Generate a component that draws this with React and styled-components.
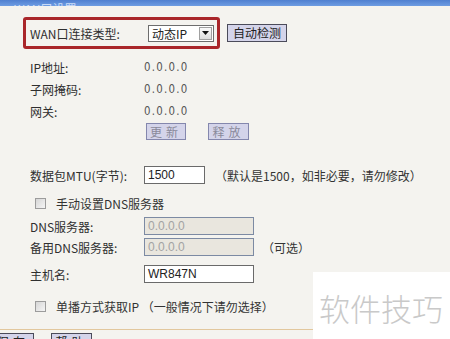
import React from "react";
import styled, { createGlobalStyle } from "styled-components";

const Global = createGlobalStyle`
  html, body { margin: 0; padding: 0; }
  body { background: #f4f3ef; font-family: "Noto Sans CJK SC", "Noto Sans", sans-serif; }
`;

const Page = styled.div`
  position: relative;
  width: 450px;
  height: 339px;
  overflow: hidden;
  background: #f4f3ef;
  color: #333;
  font-size: 12px;
`;

const Header = styled.div`
  height: 6px;
  overflow: hidden;
  display: flex;
  align-items: flex-end;
  padding-left: 14px;
  background: linear-gradient(#4f7fd0, #6d9ce2);
`;

const HeaderTitle = styled.span`
  line-height: 16px;
  font-size: 12px;
  color: #c9dbf7;
  margin-bottom: -11px;
`;

const WanRow = styled.div`
  display: flex;
  align-items: center;
  margin: 11px 0 0 23px;
  height: 32px;
`;

const WanBox = styled.div`
  box-sizing: border-box;
  width: 197px;
  height: 32px;
  border: 3px solid #a9262a;
  border-radius: 3px;
  display: flex;
  align-items: center;
  padding-left: 4px;
`;

const Label = styled.span`
  width: ${(p) => p.$w || 114}px;
  flex: none;
  color: #2f2f2f;
  font-size: 12px;
  white-space: nowrap;
`;

const Select = styled.div`
  box-sizing: border-box;
  width: 66px;
  height: 17px;
  margin-left: 2px;
  border: 1px solid #6d6d6d;
  background: #fff;
  display: flex;
  align-items: center;
  justify-content: space-between;
  padding: 0 1px 0 3px;
  font-size: 12px;
  color: #222;
`;

const DropBtn = styled.span`
  box-sizing: border-box;
  width: 13px;
  height: 13px;
  border: 1px solid #a0a0a0;
  background: linear-gradient(#fafafa, #dcdcdc);
  display: flex;
  align-items: center;
  justify-content: center;
`;

const Btn = styled.button`
  box-sizing: border-box;
  height: ${(p) => p.$h || 18}px;
  width: ${(p) => p.$w}px;
  margin-left: ${(p) => p.$ml || 0}px;
  padding: 0;
  border: 1px solid ${(p) => (p.$disabled ? "#8487ad" : "#4b4b5a")};
  background: #d4d4ea;
  color: ${(p) => (p.$disabled ? "#8a8a9a" : "#222")};
  font-family: "Noto Sans CJK SC", sans-serif;
  font-size: 12px;
  letter-spacing: ${(p) => p.$ls || 0}px;
  line-height: 1;
  flex: none;
`;

const Form = styled.div`
  padding-left: 30px;
`;

const Row = styled.div`
  display: flex;
  align-items: center;
  height: ${(p) => p.$h}px;
  margin-top: ${(p) => p.$mt}px;
`;

const Value = styled.span`
  color: #555;
  font-size: 12px;
  letter-spacing: 1.5px;
  font-family: "DejaVu Sans", sans-serif;
  transform: scaleX(0.85);
  transform-origin: left center;
`;

const Input = styled.div`
  box-sizing: border-box;
  width: ${(p) => p.$w}px;
  height: 18px;
  border: 1px solid ${(p) => (p.$disabled ? "#7c8aa3" : "#6a6a6a")};
  background: ${(p) => (p.$disabled ? "#e9e6de" : "#fff")};
  color: ${(p) => (p.$disabled ? "#a3a3a3" : "#222")};
  font-family: "Liberation Sans", Arial, sans-serif;
  font-size: 12px;
  display: flex;
  align-items: center;
  padding-left: 3px;
  flex: none;
`;

const Note = styled.span`
  margin-left: ${(p) => p.$ml}px;
  color: #333;
  font-size: 12px;
  white-space: nowrap;
`;

const Check = styled.span`
  box-sizing: border-box;
  width: 11px;
  height: 11px;
  margin-left: 5px;
  margin-right: 10px;
  border: 1px solid #9c9c9c;
  background: linear-gradient(135deg, #d6d6d6, #f5f5f5);
  flex: none;
`;

const Divider = styled.div`
  height: 1px;
  margin-top: 16px;
  background: #e2c79d;
`;

const Footer = styled.div`
  display: flex;
  margin: 3px 0 0 -8px;
`;

const Watermark = styled.div`
  position: absolute;
  left: 313px;
  top: 272px;
  width: 137px;
  height: 67px;
  background: #fff;
  color: #c9c9c9;
  font-size: 31px;
  font-family: "Noto Sans CJK SC", sans-serif;
  font-weight: 300;
  display: flex;
  align-items: center;
  padding: 4px 0 0 6px;
  box-sizing: border-box;
  white-space: nowrap;
`;

export default function App() {
  const info = [
    ["IP地址:", "0.0.0.0"],
    ["子网掩码:", "0.0.0.0"],
    ["网关:", "0.0.0.0"],
  ];
  return (
    <Page>
      <Global />
      <Header>
        <HeaderTitle>WAN口设置</HeaderTitle>
      </Header>
      <WanRow>
        <WanBox>
          <Label $w={116}>WAN口连接类型:</Label>
          <Select>
            动态IP
            <DropBtn>
              <svg width="7" height="4" viewBox="0 0 7 4">
                <path d="M0 0h7L3.5 4z" fill="#111" />
              </svg>
            </DropBtn>
          </Select>
        </WanBox>
        <Btn $w={60} $ml={7}>自动检测</Btn>
      </WanRow>
      <Form>
        {info.map(([l, v], i) => (
          <Row key={l} $h={22} $mt={i === 0 ? 7 : 0}>
            <Label>{l}</Label>
            <Value>{v}</Value>
          </Row>
        ))}
        <Row $h={17} $mt={1}>
          <Label $w={116} />
          <Btn $w={40} $h={17} $disabled $ls={4}>更新</Btn>
          <Btn $w={41} $h={17} $ml={22} $disabled $ls={4}>释放</Btn>
        </Row>
        <Row $h={18} $mt={26}>
          <Label>数据包MTU(字节):</Label>
          <Input $w={61}>1500</Input>
          <Note $ml={10}>（默认是1500，如非必要，请勿修改）</Note>
        </Row>
        <Row $h={14} $mt={12}>
          <Check />
          <span>手动设置DNS服务器</span>
        </Row>
        <Row $h={18} $mt={7}>
          <Label>DNS服务器:</Label>
          <Input $w={110} $disabled>0.0.0.0</Input>
        </Row>
        <Row $h={18} $mt={3}>
          <Label>备用DNS服务器:</Label>
          <Input $w={110} $disabled>0.0.0.0</Input>
          <Note $ml={8}>（可选）</Note>
        </Row>
        <Row $h={18} $mt={9}>
          <Label>主机名:</Label>
          <Input $w={110}>WR847N</Input>
        </Row>
        <Row $h={14} $mt={16}>
          <Check />
          <span>单播方式获取IP （一般情况下请勿选择）</span>
        </Row>
      </Form>
      <Divider />
      <Footer>
        <Btn $w={42} $ls={4}>保存</Btn>
        <Btn $w={41} $ml={17} $ls={4}>帮助</Btn>
      </Footer>
      <Watermark>软件技巧</Watermark>
    </Page>
  );
}
